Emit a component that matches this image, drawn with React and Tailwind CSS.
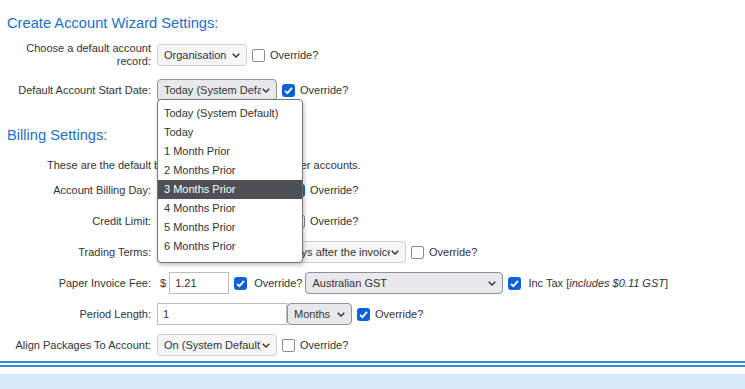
import React from "react";

const Chevron = () => (
  <svg width="8" height="5" viewBox="0 0 8 5" className="shrink-0">
    <path d="M0.7 0.7 L4 4 L7.3 0.7" fill="none" stroke="#333" strokeWidth="1.4" />
  </svg>
);

const Select = ({ text, className = "", active = false }) => (
  <div
    className={`h-[22px] flex items-center rounded-[4px] border pl-[6px] pr-[6px] gap-[1px] ${
      active ? "bg-[#e9e9ed] border-[#8f8f9d]" : "bg-[#f6f6f6] border-[#cfcfcf]"
    } ${className}`}
  >
    <span className="flex-1 overflow-hidden whitespace-nowrap">{text}</span>
    <Chevron />
  </div>
);

const Check = ({ checked, className = "" }) =>
  checked ? (
    <div className={`w-[13px] h-[13px] shrink-0 rounded-[3px] bg-[#0b62d6] flex items-center justify-center ${className}`}>
      <svg width="11" height="11" viewBox="0 0 11 11">
        <path d="M2 5.8 L4.4 8.2 L9 2.8" fill="none" stroke="#fff" strokeWidth="1.8" />
      </svg>
    </div>
  ) : (
    <div className={`w-[13px] h-[13px] shrink-0 rounded-[2px] border-[1.5px] border-[#8a8a92] bg-white ${className}`} />
  );

const Row = ({ label, children }) => (
  <div className="flex items-center h-[22px]">
    <div className="w-[144px] shrink-0 text-right leading-[13px]">{label}</div>
    <div className="ml-[6px] flex items-center">{children}</div>
  </div>
);

const Override = ({ checked, gap = "ml-[5px]" }) => (
  <>
    <Check checked={checked} className="ml-[5px]" />
    <span className={gap}>Override?</span>
  </>
);

const options = [
  "Today (System Default)",
  "Today",
  "1 Month Prior",
  "2 Months Prior",
  "3 Months Prior",
  "4 Months Prior",
  "5 Months Prior",
  "6 Months Prior",
];

export default function App() {
  return (
    <div className="relative w-[745px] h-[389px] overflow-hidden bg-white text-[11px] text-[#333] font-['Liberation_Sans',Arial,sans-serif]">
      <div className="px-[7px]">
        <h2 className="pt-[13px] text-[14.7px] leading-[20px] text-[#2271c3]">Create Account Wizard Settings:</h2>

        <div className="mt-[11px] flex flex-col gap-[13px]">
          <Row label="Choose a default account record:">
            <Select text="Organisation" className="w-[90px]" />
            <Override checked={false} />
          </Row>
          <Row label="Default Account Start Date:">
            <Select text="Today (System Default)" className="w-[120px]" active />
            <Override checked={true} />
          </Row>
        </div>

        <h2 className="mt-[24px] text-[14.7px] leading-[20px] text-[#2271c3]">Billing Settings:</h2>

        <p className="mt-[13px] pl-[40px] leading-[14px]">
          These are the default billing settings for new customer accounts.
        </p>

        <div className="mt-[7px] flex flex-col gap-[9px]">
          <Row label="Account Billing Day:">
            <Select text="1st of the Month" className="w-[130px]" active />
            <Override checked={true} />
          </Row>
          <Row label="Credit Limit:">
            <Select text="No Limit" className="w-[130px]" />
            <Override checked={false} />
          </Row>
          <Row label="Trading Terms:">
            <Select text="Payment is due within 14 days after the invoice date" className="w-[249px]" />
            <Override checked={false} />
          </Row>
          <Row label="Paper Invoice Fee:">
            <span className="ml-[3px]">$</span>
            <div className="ml-[3px] w-[60px] h-[22px] border border-[#bdbdbd] bg-white flex items-center pl-[5px]">1.21</div>
            <Override checked={true} gap="ml-[7px]" />
            <Select text="Australian GST" className="ml-[3px] w-[198px]" active />
            <Check checked={true} className="ml-[5px]" />
            <span className="ml-[7px]">
              Inc Tax [<i>includes $0.11 GST</i>]
            </span>
          </Row>
          <Row label="Period Length:">
            <div className="w-[130px] h-[22px] border border-[#bdbdbd] bg-white flex items-center pl-[5px]">1</div>
            <Select text="Months" className="w-[65px]" active />
            <Override checked={true} />
          </Row>
          <Row label="Align Packages To Account:">
            <Select text="On (System Default)" className="w-[120px]" />
            <Override checked={false} />
          </Row>
        </div>
      </div>

      <div className="mt-[5px] h-[2px] bg-[#2f86d4]" />
      <div className="mt-[2px] h-[2px] bg-[#2f86d4]" />
      <div className="mt-[7px] h-[20px] bg-[#dbeaf8]" />

      <div className="absolute left-[157px] top-[99px] w-[146px] h-[164px] rounded-[4px] border border-[#767676] bg-white shadow-[1px_2px_4px_rgba(0,0,0,0.25)] pt-[4px]">
        {options.map((o, i) => (
          <div
            key={o}
            className={`h-[19px] leading-[19px] pl-[6px] whitespace-nowrap ${
              i === 4 ? "bg-[#4e4f57] text-white" : ""
            }`}
          >
            {o}
          </div>
        ))}
      </div>
    </div>
  );
}
